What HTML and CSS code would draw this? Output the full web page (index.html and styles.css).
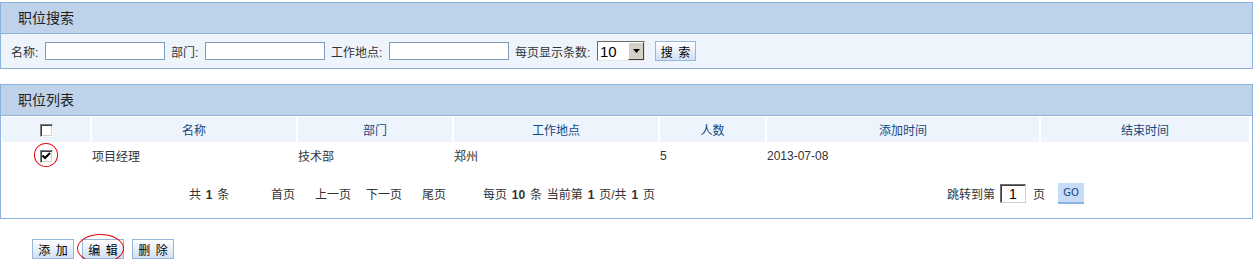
FILE: index.html
```html
<!DOCTYPE html>
<html lang="zh-CN">

<head>
    <meta charset="UTF-8">
    <title>职位管理</title>
    <link rel="stylesheet" href="styles.css">
</head>

<body>
    <div class="panel search-panel">
        <div class="panel-title">职位搜索</div>
        <form class="search-body">
            <label class="lbl lbl-name">名称:</label>
            <input class="txt" type="text">
            <label class="lbl lbl-dept">部门:</label>
            <input class="txt" type="text">
            <label class="lbl lbl-place">工作地点:</label>
            <input class="txt" type="text">
            <label class="lbl lbl-size">每页显示条数:</label>
            <span class="select-box">
                <select class="page-size">
                    <option>10</option>
                    <option>20</option>
                    <option>50</option>
                </select>
                <span class="select-arrow">
                    <svg width="7" height="4" viewBox="0 0 7 4"><path d="M0 0H7L3.5 4Z" fill="#000"/></svg>
                </span>
            </span>
            <button class="btn btn-search" type="button">搜 索</button>
        </form>
    </div>

    <div class="panel list-panel">
        <div class="panel-title">职位列表</div>
        <table class="grid">
            <colgroup>
                <col style="width:88px">
                <col style="width:204px">
                <col style="width:154px">
                <col style="width:204px">
                <col style="width:105px">
                <col style="width:272px">
                <col style="width:208px">
            </colgroup>
            <thead>
                <tr>
                    <th><span class="cb"></span></th>
                    <th>名称</th>
                    <th>部门</th>
                    <th>工作地点</th>
                    <th>人数</th>
                    <th>添加时间</th>
                    <th>结束时间</th>
                </tr>
            </thead>
            <tbody>
                <tr>
                    <td class="cb-cell">
                        <span class="mark">
                            <span class="cb checked">
                                <svg width="9" height="8" viewBox="0 0 9 8"><path d="M0.5 3.5L3 6L8 1" stroke="#000" stroke-width="2" fill="none"/></svg>
                            </span>
                            <span class="ring ring-cb"></span>
                        </span>
                    </td>
                    <td>项目经理</td>
                    <td>技术部</td>
                    <td>郑州</td>
                    <td>5</td>
                    <td>2013-07-08</td>
                    <td></td>
                </tr>
            </tbody>
        </table>
        <div class="pager">
            <span>共 <b>1</b> 条</span>
            <a>首页</a>
            <a>上一页</a>
            <a>下一页</a>
            <a>尾页</a>
            <span>每页 <b>10</b> 条 当前第 <b>1</b> 页/共 <b>1</b> 页</span>
            <span>跳转到第</span>
            <span><input class="goto" type="text" value="1"></span>
            <span>页</span>
            <span><button class="btn-go" type="button">GO</button></span>
        </div>
    </div>

    <div class="actions">
        <button class="btn" type="button">添 加</button>
        <span class="mark">
            <button class="btn" type="button">编 辑</button>
            <span class="ring ring-btn"></span>
        </span>
        <button class="btn" type="button">删 除</button>
    </div>
</body>

</html>
```

FILE: styles.css
```css
body {
    margin: 0;
    font-family: "Liberation Sans", "Noto Sans CJK SC", sans-serif;
    font-size: 12px;
    color: #333;
    background: #fff;
}

.panel {
    width: 1251px;
    border: 1px solid #8db2dc;
}

.search-panel {
    margin-top: 2px;
}

.list-panel {
    margin-top: 15px;
}

.panel-title {
    height: 30px;
    line-height: 30px;
    padding-left: 17px;
    background: #bed3e9;
    border-bottom: 1px solid #8db2dc;
    font-size: 14px;
    color: #222;
}

.search-body {
    display: flex;
    align-items: center;
    height: 34px;
    margin: 0;
    padding-left: 10px;
    background: #eef4fc;
}

.lbl {
    flex: none;
    color: #333;
}

.lbl-name,
.lbl-dept {
    width: 34px;
}

.lbl-place {
    width: 58px;
}

.lbl-size {
    width: 82px;
}

.txt {
    box-sizing: border-box;
    width: 120px;
    height: 18px;
    margin: 0 6px 0 0;
    padding: 0 2px;
    border: 1px solid #7f9db9;
    background: #fff;
}

.select-box {
    display: flex;
    box-sizing: border-box;
    width: 48px;
    height: 20px;
    border: 1px solid;
    border-color: #6a6a6a #e4e4e4 #e4e4e4 #6a6a6a;
    background: #fff;
}

.page-size {
    appearance: none;
    -webkit-appearance: none;
    width: 30px;
    height: 18px;
    border: 0;
    padding: 0 0 0 2px;
    background: #fff;
    font-family: "Liberation Sans", sans-serif;
    font-size: 15px;
    color: #000;
    outline: none;
}

.select-arrow {
    display: flex;
    align-items: center;
    justify-content: center;
    box-sizing: border-box;
    width: 16px;
    height: 18px;
    background: #d4d0c8;
    border: 1px solid;
    border-color: #fff #404040 #404040 #fff;
}

.btn {
    box-sizing: border-box;
    width: 42px;
    height: 20px;
    padding: 0;
    border: 1px solid #95b7de;
    background: linear-gradient(#ffffff, #cfe0f4);
    font-family: "Noto Sans CJK SC", sans-serif;
    font-size: 12px;
    word-spacing: 3px;
    color: #000;
    cursor: pointer;
}

.btn-search {
    width: 41px;
    margin-left: 10px;
}

.grid {
    width: 1251px;
    table-layout: fixed;
    border-collapse: separate;
    border-spacing: 2px 1px;
    margin-left: -1px;
}

.grid th {
    height: 25px;
    padding: 0;
    background: #eef4fc;
    font-weight: normal;
    color: #16477e;
    text-align: center;
}

.grid td {
    height: 25px;
    padding: 0;
    color: #333;
}

.grid .cb-cell {
    text-align: center;
}

.cb {
    display: inline-flex;
    align-items: center;
    justify-content: center;
    box-sizing: border-box;
    width: 13px;
    height: 13px;
    vertical-align: middle;
    border: 1px solid;
    border-color: #808080 #fff #fff #808080;
    box-shadow: inset 1px 1px #404040, inset -1px -1px #d4d0c8;
    background: #fff;
}

.mark {
    position: relative;
    display: inline-block;
}

.ring {
    position: absolute;
    border: 1px solid #e8000b;
    border-radius: 50%;
    pointer-events: none;
}

.ring-cb {
    left: -6px;
    right: -5px;
    top: -5px;
    bottom: -4px;
}

.ring-btn {
    left: -5px;
    right: 0;
    top: -5px;
    bottom: -4px;
}

.pager {
    display: grid;
    grid-template-columns: 82px 44px 51px 56px 61px 464px 53px 33px 25px auto;
    align-items: center;
    height: 49px;
    padding-left: 188px;
    word-spacing: 1.5px;
    color: #333;
}

.pager b {
    font-family: "Liberation Sans", sans-serif;
}

.goto {
    box-sizing: border-box;
    width: 26px;
    height: 19px;
    padding: 0;
    border: 1px solid;
    border-color: #6a6a6a #d4d0c8 #d4d0c8 #6a6a6a;
    box-shadow: inset 1px 1px #404040;
    text-align: center;
    font-family: "Liberation Sans", sans-serif;
    font-size: 14px;
    color: #000;
}

.btn-go {
    box-sizing: border-box;
    width: 26px;
    height: 21px;
    padding: 0;
    border: 0;
    border-bottom: 2px solid #8db2dc;
    background: #c6dcf7;
    font-family: "DejaVu Sans", sans-serif;
    font-size: 10px;
    color: #16477e;
}

.actions {
    display: flex;
    align-items: center;
    gap: 8px;
    margin-top: 20px;
    padding-left: 32px;
}
```
